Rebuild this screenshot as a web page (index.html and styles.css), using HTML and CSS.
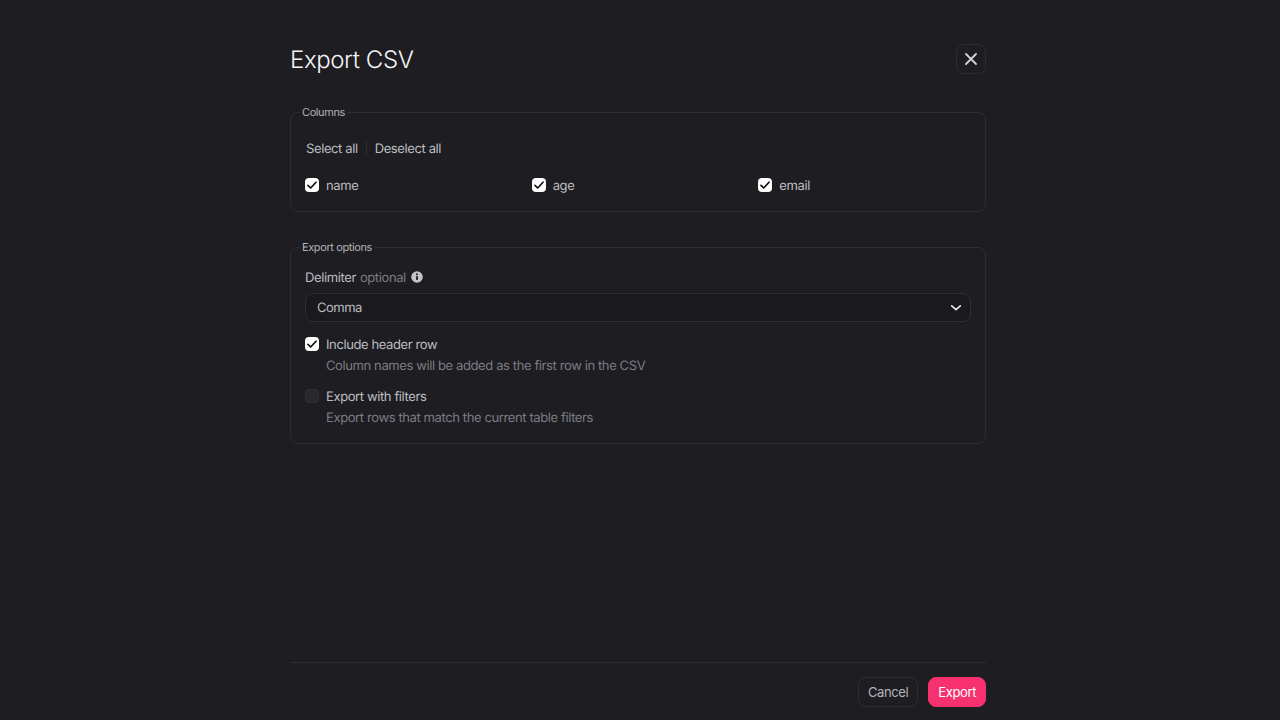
FILE: index.html
```html
<!DOCTYPE html>
<html>
<head>
<meta charset="utf-8" />
<title>Export CSV</title>
<link rel="stylesheet" href="styles.css">
</head>
<body>
<div class="dialog">
	<div class="header">
		<h1>Export CSV</h1>
		<button class="close" aria-label="Close">
			<svg width="16" height="16" viewBox="0 0 16 16"><path d="M3 3l10 10M13 3L3 13" stroke="#d4d4d8" stroke-width="1.8" stroke-linecap="round" fill="none"/></svg>
		</button>
	</div>
	<div class="content">
		<fieldset class="group columns">
			<legend>Columns</legend>
			<div class="links">
				<a class="txt">Select all</a>
				<span class="sep"></span>
				<a class="txt">Deselect all</a>
			</div>
			<div class="col-grid">
				<label class="col"><span class="check on"><svg width="14" height="14" viewBox="0 0 14 14"><path d="M3 7.4l2.7 2.6L11 4.2" stroke="#111114" stroke-width="1.7" stroke-linecap="round" stroke-linejoin="round" fill="none"/></svg></span><span class="txt">name</span></label>
				<label class="col"><span class="check on"><svg width="14" height="14" viewBox="0 0 14 14"><path d="M3 7.4l2.7 2.6L11 4.2" stroke="#111114" stroke-width="1.7" stroke-linecap="round" stroke-linejoin="round" fill="none"/></svg></span><span class="txt">age</span></label>
				<label class="col"><span class="check on"><svg width="14" height="14" viewBox="0 0 14 14"><path d="M3 7.4l2.7 2.6L11 4.2" stroke="#111114" stroke-width="1.7" stroke-linecap="round" stroke-linejoin="round" fill="none"/></svg></span><span class="txt">email</span></label>
			</div>
		</fieldset>
		<fieldset class="group options">
			<legend>Export options</legend>
			<div class="field-label">
				<span class="txt">Delimiter</span>
				<span class="txt muted">optional</span>
				<svg class="info" width="12" height="12" viewBox="0 0 12 12"><circle cx="6" cy="6" r="5.8" fill="#c4c4c8"/><rect x="5.1" y="5" width="1.8" height="4" rx=".4" fill="#1d1d22"/><circle cx="6" cy="3.3" r="1" fill="#1d1d22"/></svg>
			</div>
			<div class="select">
				<span class="value">Comma</span>
				<svg width="14" height="14" viewBox="0 0 14 14"><path d="M2.7 4.8L7 8.6l4.3-3.8" stroke="#e4e4e7" stroke-width="1.7" stroke-linecap="round" stroke-linejoin="round" fill="none"/></svg>
			</div>
			<div class="option">
				<span class="check on"><svg width="14" height="14" viewBox="0 0 14 14"><path d="M3 7.4l2.7 2.6L11 4.2" stroke="#111114" stroke-width="1.7" stroke-linecap="round" stroke-linejoin="round" fill="none"/></svg></span>
				<div class="opt-text">
					<div class="opt-title">Include header row</div>
					<div class="opt-desc">Column names will be added as the first row in the CSV</div>
				</div>
			</div>
			<div class="option">
				<span class="check"></span>
				<div class="opt-text">
					<div class="opt-title">Export with filters</div>
					<div class="opt-desc">Export rows that match the current table filters</div>
				</div>
			</div>
		</fieldset>
	</div>
	<div class="footer">
		<button class="btn">Cancel</button>
		<button class="btn primary">Export</button>
	</div>
</div>
</body>
</html>
```

FILE: styles.css
```css
*{
	box-sizing: border-box;
}

html, body{
	height: 100%;
}

body{
	margin: 0;
	background-color: #1d1d22;
	color: #bdbdc1;
	font-family: Inter, "Noto Sans", sans-serif;
	font-size: 13px;
	letter-spacing: -0.39px;
	text-rendering: geometricPrecision;
}

.dialog{
	width: 696px;
	height: 720px;
	margin-left: 290px;
	display: flex;
	flex-direction: column;
}

.header{
	display: flex;
	justify-content: space-between;
	align-items: center;
	padding-top: 44px;
	height: 74px;
}

h1{
	margin: 2px 0 0;
	font-size: 24px;
	line-height: 30px;
	font-weight: 300;
	letter-spacing: -0.4px;
	color: #f4f4f5;
}

.close{
	width: 30px;
	height: 30px;
	padding: 0;
	display: flex;
	align-items: center;
	justify-content: center;
	background: transparent;
	border: 1px solid #2d2d33;
	border-radius: 8px;
}

.content{
	flex: 1;
	padding-top: 31px;
}

.group{
	margin: 0 0 28px;
	padding: 0 14px;
	border: 1px solid #2d2d33;
	border-radius: 8px;
	min-width: 0;
}

legend{
	margin-left: -5px;
	padding: 0 2px;
	font-size: 11px;
	line-height: 14px;
	color: #b4b4b8;
}

.txt{
	padding-top: 2px;
}

.columns{
	height: 107px;
}

.links{
	display: flex;
	align-items: center;
	height: 20px;
	margin-top: 19px;
	padding-left: 1px;
}

.sep{
	width: 1px;
	height: 18px;
	margin: 0 8px;
	background-color: #2a2a2f;
}

.col-grid{
	display: grid;
	grid-template-columns: repeat(3, 1fr);
	column-gap: 14px;
	margin-top: 17px;
}

.col{
	display: flex;
	align-items: center;
	gap: 7px;
	height: 20px;
}

.check{
	flex: none;
	width: 14px;
	height: 14px;
	border-radius: 4px;
	background-color: #28282d;
	border: 1px solid #2d2d33;
	display: block;
}

.check.on{
	background-color: #ffffff;
	border: 0;
}

.check svg{
	display: block;
}

.options{
	height: 204px;
}

.field-label{
	display: flex;
	align-items: center;
	gap: 4px;
	margin-top: 13px;
	height: 20px;
}

.muted{
	color: #7c7c82;
}

.info{
	margin-left: 1px;
}

.select{
	display: flex;
	justify-content: space-between;
	align-items: center;
	height: 29px;
	margin-top: 6px;
	padding: 0 7px 0 11px;
	background-color: #1a1a1e;
	border: 1px solid #2d2d33;
	border-radius: 8px;
}

.value{
	letter-spacing: -0.5px;
}

.option{
	display: flex;
	gap: 7px;
	margin-top: 12px;
}

.option .check{
	margin-top: 3px;
}

.opt-text{
	padding-top: 1px;
}

.opt-title{
	line-height: 20px;
}

.opt-desc{
	margin-top: 1px;
	line-height: 20px;
	color: #7c7c82;
}

.option + .option{
	margin-top: 10px;
}

.footer{
	display: flex;
	justify-content: flex-end;
	gap: 10px;
	height: 58px;
	padding-top: 14px;
	border-top: 1px solid #2d2d33;
}

.btn{
	height: 30px;
	padding: 0 9px;
	font-family: inherit;
	font-size: 13px;
	letter-spacing: inherit;
	color: #b4b4b8;
	background: transparent;
	border: 1px solid #2d2d33;
	border-radius: 8px;
}

.btn.primary{
	color: #ffffff;
	background-color: #f7316f;
	border-color: #f7316f;
}
```
